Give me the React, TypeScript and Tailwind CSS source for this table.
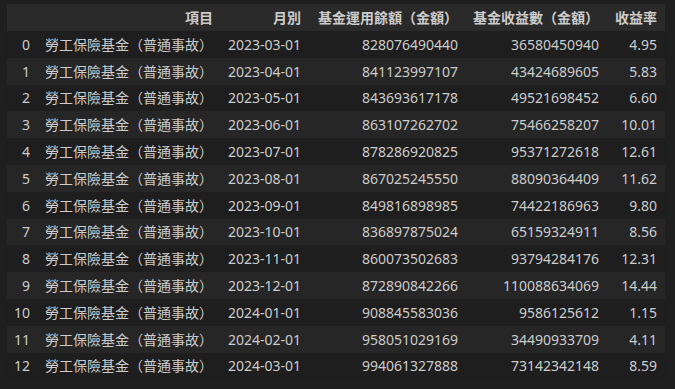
import React from 'react';

interface Row {
  item: string;
  month: string;
  fund: string;
  income: string;
  rate: string;
}

const ITEM = '勞工保險基金（普通事故）';

const rows: Row[] = [
  { item: ITEM, month: '2023-03-01', fund: '828076490440', income: '36580450940', rate: '4.95' },
  { item: ITEM, month: '2023-04-01', fund: '841123997107', income: '43424689605', rate: '5.83' },
  { item: ITEM, month: '2023-05-01', fund: '843693617178', income: '49521698452', rate: '6.60' },
  { item: ITEM, month: '2023-06-01', fund: '863107262702', income: '75466258207', rate: '10.01' },
  { item: ITEM, month: '2023-07-01', fund: '878286920825', income: '95371272618', rate: '12.61' },
  { item: ITEM, month: '2023-08-01', fund: '867025245550', income: '88090364409', rate: '11.62' },
  { item: ITEM, month: '2023-09-01', fund: '849816898985', income: '74422186963', rate: '9.80' },
  { item: ITEM, month: '2023-10-01', fund: '836897875024', income: '65159324911', rate: '8.56' },
  { item: ITEM, month: '2023-11-01', fund: '860073502683', income: '93794284176', rate: '12.31' },
  { item: ITEM, month: '2023-12-01', fund: '872890842266', income: '110088634069', rate: '14.44' },
  { item: ITEM, month: '2024-01-01', fund: '908845583036', income: '9586125612', rate: '1.15' },
  { item: ITEM, month: '2024-02-01', fund: '958051029169', income: '34490933709', rate: '4.11' },
  { item: ITEM, month: '2024-03-01', fund: '994061327888', income: '73142342148', rate: '8.59' },
];

// column widths, matched to where each right edge sits
const widths = ['w-[31px]', 'w-[183px]', 'w-[88px]', 'w-[157px]', 'w-[141px]', 'w-[58px]'];
const cell = 'p-0 pr-2 text-right whitespace-nowrap';

export default function App() {
  return (
    <div
      className="min-h-[389px] w-[675px] bg-[#1f1f1f] pl-[7px] pt-1 text-[14px] text-[#cccccc]"
      style={{ fontFamily: '"Noto Sans", "Noto Sans CJK TC", sans-serif' }}
    >
      <table className="w-[658px] table-fixed border-collapse">
        <thead>
          <tr className="h-[27px] bg-[#2a2a2a] font-semibold">
            {['', '項目', '月別', '基金運用餘額（金額）', '基金收益數（金額）', '收益率'].map((h, j) => (
              <th key={j} className={`${cell} ${widths[j]}`}>{h}</th>
            ))}
          </tr>
        </thead>
        <tbody>
          {rows.map((r, i) => (
            <tr key={i} className={i % 2 === 1 ? 'h-[26.8px] bg-[#262626]' : 'h-[26.8px] bg-[#1e1e1e]'}>
              <td className={cell}>{i}</td>
              <td className={cell}>{r.item}</td>
              <td className={cell}>{r.month}</td>
              <td className={cell}>{r.fund}</td>
              <td className={cell}>{r.income}</td>
              <td className={cell}>{r.rate}</td>
            </tr>
          ))}
        </tbody>
      </table>
    </div>
  );
}
